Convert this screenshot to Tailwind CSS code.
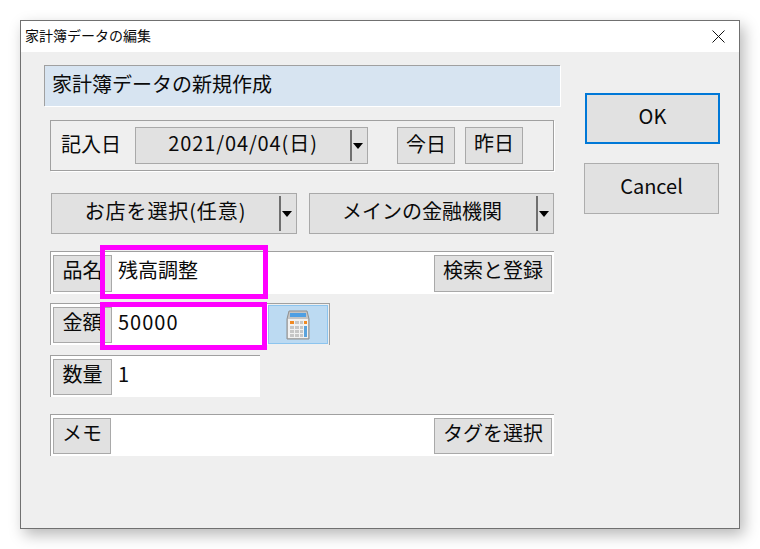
<!DOCTYPE html>
<html lang="ja">
<head>
<meta charset="utf-8">
<script src="https://cdn.jsdelivr.net/npm/@tailwindcss/browser@4"></script>
</head>
<body class="bg-white w-[760px] h-[549px] overflow-hidden pt-[20px] pl-[20px] font-['Noto_Sans_CJK_JP','Noto_Sans',sans-serif] text-[#0a0a0a] text-[20px] leading-none">
<div class="relative w-[720px] h-[509px] border border-[#707070] bg-[#efefef] shadow-[4px_6px_14px_rgba(0,0,0,0.28)] flex flex-col">
  <div class="h-[31px] shrink-0 bg-white flex items-center justify-between pl-[4px] pr-[14px] text-[14px]">
    <span class="pb-[4px]">家計簿データの編集</span>
    <svg class="w-[13px] h-[13px]" viewBox="0 0 13 13" fill="none" stroke="#111" stroke-width="1"><path d="M0.5 0.5L12.5 12.5M12.5 0.5L0.5 12.5"/></svg>
  </div>
  <div class="flex flex-1">
    <div class="w-[563px] shrink-0 pl-[23px] pt-[13px]">
      <div class="w-[516px] h-[41px] bg-[#d7e4f1] border-t border-l border-[#a0a0a0] shadow-[1px_1px_0_#fff] flex items-center pl-[7px] pb-[4px]">家計簿データの新規作成</div>
      <div class="ml-[6px] mt-[14px] w-[504px] h-[51px] border border-[#a0a0a0] shadow-[1px_1px_0_#fff] flex items-center pl-[10px]">
        <span class="w-[74px] pb-[4px]">記入日</span>
        <div class="w-[233px] h-[37px] bg-[#e1e1e1] border border-[#a9a9a9] flex items-center">
          <span class="w-[214px] text-center pb-[5px] tracking-[0.9px]">2021/04/04(日)</span>
          <span class="w-[2px] h-[31px] bg-[#6f6f6f]"></span>
          <span class="ml-[1px] w-0 h-0 border-x-[5.5px] border-x-transparent border-t-[6px] border-t-black"></span>
        </div>
        <div class="ml-[29px] w-[58px] h-[37px] bg-[#e1e1e1] border border-[#a9a9a9] flex items-center justify-center pb-[4px]">今日</div>
        <div class="ml-[10px] w-[58px] h-[37px] bg-[#e1e1e1] border border-[#a9a9a9] flex items-center justify-center pb-[5px]">昨日</div>
      </div>
      <div class="ml-[7px] mt-[22px] flex gap-[12px]">
        <div class="w-[246px] h-[41px] bg-[#e1e1e1] border border-[#a9a9a9] flex items-center">
          <span class="w-[227px] text-center pb-[5px] tracking-[0.9px]">お店を選択(任意)</span>
          <span class="w-[2px] h-[35px] bg-[#6f6f6f]"></span>
          <span class="ml-[1px] w-0 h-0 border-x-[5.5px] border-x-transparent border-t-[6px] border-t-black"></span>
        </div>
        <div class="w-[245px] h-[41px] bg-[#e1e1e1] border border-[#a9a9a9] flex items-center">
          <span class="w-[224px] mr-[2px] text-center pb-[5px]">メインの金融機関</span>
          <span class="w-[2px] h-[35px] bg-[#6f6f6f]"></span>
          <span class="ml-[1px] w-0 h-0 border-x-[5.5px] border-x-transparent border-t-[6px] border-t-black"></span>
        </div>
      </div>
      <div class="ml-[6px] mt-[17px] w-[504px] h-[43px] bg-white border-t border-l border-[#a0a0a0] flex items-center pl-[2px] pr-[2px]">
        <div class="w-[59px] h-[37px] bg-[#e1e1e1] border border-[#a9a9a9] flex items-center justify-center pb-[6px]">品名</div>
        <span class="ml-[6px] flex-1 pb-[6px]">残高調整</span>
        <div class="w-[118px] h-[37px] bg-[#e1e1e1] border border-[#a9a9a9] flex items-center justify-center pb-[6px]">検索と登録</div>
      </div>
      <div class="ml-[6px] mt-[9px] w-[280px] h-[42px] border-t border-l border-r border-[#a0a0a0] flex">
        <div class="w-[217px] bg-white flex items-center pl-[2px]">
          <div class="w-[59px] h-[36px] bg-[#e1e1e1] border border-[#a9a9a9] flex items-center justify-center pb-[6px]">金額</div>
          <span class="ml-[6px] pb-[6px] tracking-[1px]">50000</span>
        </div>
        <div class="mt-[1px] mr-[1px] flex-1 h-[39px] bg-[#bcdaf2] border border-[#8cc4ee] flex items-center justify-center">
          <svg class="w-[24px] h-[30px]" viewBox="0 0 24 30">
            <path d="M1 9L3 1H21L23 9V29H1Z" fill="#c4c4c4" stroke="#8f8f8f"/>
            <rect x="4" y="3" width="16" height="4" fill="#4f9fe3"/>
            <rect x="2" y="9" width="20" height="19" fill="#f1f1f1"/>
            <g fill="#c6c6c6">
              <rect x="4" y="11" width="4" height="3" fill="#f08a24"/><rect x="9" y="11" width="4" height="3"/><rect x="14" y="11" width="3" height="3"/><rect x="18" y="11" width="3" height="3" fill="#f08a24"/>
              <rect x="4" y="16" width="4" height="3"/><rect x="9" y="16" width="4" height="3"/><rect x="14" y="16" width="3" height="3"/>
              <rect x="4" y="20" width="4" height="3"/><rect x="9" y="20" width="4" height="3"/><rect x="14" y="20" width="3" height="3"/>
              <rect x="4" y="24" width="4" height="3"/><rect x="9" y="24" width="4" height="3"/><rect x="14" y="24" width="3" height="3"/>
              <rect x="18" y="16" width="3" height="11" fill="#5aa2dc"/>
            </g>
          </svg>
        </div>
      </div>
      <div class="ml-[6px] mt-[10px] w-[210px] h-[42px] bg-white border-t border-l border-[#a0a0a0] flex items-center pl-[2px]">
        <div class="w-[59px] h-[36px] bg-[#e1e1e1] border border-[#a9a9a9] flex items-center justify-center pb-[6px]">数量</div>
        <span class="ml-[6px] pb-[6px]">1</span>
      </div>
      <div class="ml-[6px] mt-[17px] w-[504px] h-[42px] bg-white border-t border-l border-[#a0a0a0] flex items-center justify-between pl-[2px] pr-[2px]">
        <div class="w-[58px] h-[36px] bg-[#e1e1e1] border border-[#a9a9a9] flex items-center justify-center pb-[6px]">メモ</div>
        <div class="w-[118px] h-[36px] bg-[#e1e1e1] border border-[#a9a9a9] flex items-center justify-center pb-[6px]">タグを選択</div>
      </div>
    </div>
    <div class="pt-[41px]">
      <div class="ml-[1px] w-[135px] h-[51px] bg-[#e1e1e1] border-2 border-[#0078d7] flex items-center justify-center pb-[5px]">OK</div>
      <div class="mt-[19px] w-[135px] h-[51px] bg-[#e1e1e1] border border-[#adadad] flex items-center justify-center pb-[5px]">Cancel</div>
    </div>
  </div>
  <div class="absolute left-[79px] top-[224px] w-[168px] h-[54px] border-[5px] border-[#ff00ff]"></div>
  <div class="absolute left-[79px] top-[281px] w-[167px] h-[48px] border-[5px] border-[#ff00ff]"></div>
</div>
</body>
</html>
